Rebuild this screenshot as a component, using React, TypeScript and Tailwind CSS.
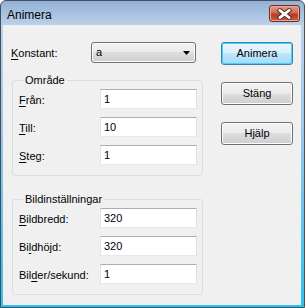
import React from "react";

function Field({ value }: { value: string }) {
  return (
    <div className="w-[97px] h-[20px] bg-white border border-t-[#abadb3] border-l-[#e2e3ea] border-r-[#dbdfe6] border-b-[#e3e9ef] flex items-center pl-[3px] text-[11px] leading-[13px] text-black">
      {value}
    </div>
  );
}

function Row({ label, value }: { label: React.ReactNode; value: string }) {
  return (
    <div className="flex items-center h-[20px]">
      <span className="w-[81px] text-[11px] leading-[13px] pt-[2px]">{label}</span>
      <Field value={value} />
    </div>
  );
}

function U({ children }: { children: React.ReactNode }) {
  return <span className="underline underline-offset-[2px] decoration-1">{children}</span>;
}

function Btn({ children, primary }: { children: React.ReactNode; primary?: boolean }) {
  return (
    <div
      className={
        primary
          ? "w-[72px] h-[23px] rounded-[3px] border border-[#3c7fb1] bg-[linear-gradient(180deg,#eaf6fd_0%,#d9f0fc_50%,#bee6fd_50%,#a7d9f5_100%)] shadow-[inset_0_0_0_1px_#48d0f8] flex items-center justify-center text-[11px] leading-[13px]"
          : "w-[72px] h-[23px] rounded-[3px] border border-[#707070] bg-[linear-gradient(180deg,#f2f2f2_0%,#ebebeb_50%,#dddddd_50%,#cfcfcf_100%)] shadow-[inset_0_0_0_1px_#fcfcfc] flex items-center justify-center text-[11px] leading-[13px]"
      }
    >
      {children}
    </div>
  );
}

function Group({ title, children }: { title: string; children: React.ReactNode }) {
  return (
    <fieldset className="w-[191px] ml-[1px] border border-[#d5dfe5] rounded-[3px] pl-[6px] pb-[10px]">
      <legend className="ml-[4px] px-[2px] text-[11px] leading-[13px]">{title}</legend>
      <div className="flex flex-col gap-[8px] mt-[2px]">{children}</div>
    </fieldset>
  );
}

export default function App() {
  return (
    <div className="w-[305px] h-[308px] border border-[#41505f] rounded-t-[6px] bg-[linear-gradient(180deg,#93b1d4_0px,#bcd2eb_25px,#9cc6ea_130px,#2cc2f0_100%)] flex flex-col font-['Liberation_Sans',Arial,sans-serif] text-black overflow-hidden">
      <div className="h-[24px] flex items-start shrink-0">
        <span className="pl-[6px] pt-[7px] text-[12px] leading-[14px] text-black">Animera</span>
        <div className="ml-auto mt-[4px] mr-[4px] w-[31px] h-[17px] rounded-[3px] border border-[#6f2a1e] bg-[linear-gradient(180deg,#e39a88_0%,#d06a52_45%,#b93a22_55%,#cc5a3c_100%)] shadow-[inset_0_0_0_1px_#eeaa98] flex items-center justify-center">
          <svg width="17" height="12" viewBox="0 0 17 12">
            <path d="M4 2.5 L13 9.5 M13 2.5 L4 9.5" stroke="#4a2a24" strokeWidth="4.6" strokeLinecap="square" />
            <path d="M4 2.5 L13 9.5 M13 2.5 L4 9.5" stroke="#ffffff" strokeWidth="2.8" strokeLinecap="square" />
          </svg>
        </div>
      </div>
      <div className="flex-1 ml-[2px] mr-[3px] mb-[2px] bg-[#f0f0f0] flex pl-[8px] pt-[17px]">
        <div className="w-[193px] flex flex-col">
          <div className="flex items-center h-[21px]">
            <span className="w-[80px] text-[11px] leading-[13px] pt-[2px]">
              <U>K</U>onstant:
            </span>
            <div className="w-[105px] h-[21px] rounded-[3px] border border-[#707070] bg-[linear-gradient(180deg,#f2f2f2_0%,#ebebeb_50%,#dddddd_50%,#cfcfcf_100%)] shadow-[inset_0_0_0_1px_#fcfcfc] flex items-center pl-[4px] pr-[5px] text-[11px] leading-[13px]">
              <span className="flex-1">a</span>
              <svg width="7" height="4" viewBox="0 0 7 4">
                <path d="M0 0 H7 L3.5 4 Z" fill="#000" />
              </svg>
            </div>
          </div>
          <div className="mt-[11px]">
            <Group title="Område">
              <Row label={<><U>F</U>rån:</>} value="1" />
              <Row label={<><U>T</U>ill:</>} value="10" />
              <Row label={<><U>S</U>teg:</>} value="1" />
            </Group>
          </div>
          <div className="mt-[17px]">
            <Group title="Bildinställningar">
              <Row label={<><U>B</U>ildbredd:</>} value="320" />
              <Row label={<>Bi<U>l</U>dhöjd:</>} value="320" />
              <Row label={<>Bil<U>d</U>er/sekund:</>} value="1" />
            </Group>
          </div>
        </div>
        <div className="ml-[17px] flex flex-col gap-[17px]">
          <Btn primary>Animera</Btn>
          <Btn>Stäng</Btn>
          <Btn>Hjälp</Btn>
        </div>
      </div>
    </div>
  );
}
